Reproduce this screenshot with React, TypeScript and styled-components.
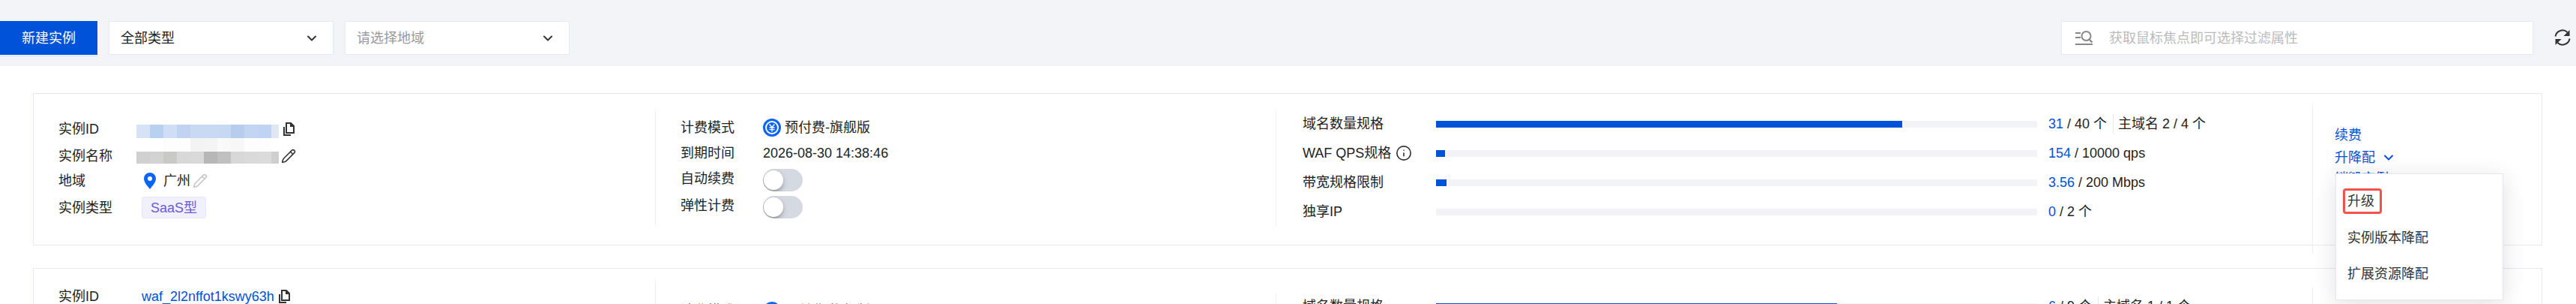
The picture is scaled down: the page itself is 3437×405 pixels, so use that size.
import React from "react";
import styled, { createGlobalStyle } from "styled-components";
import { ChevronDown, Info, Pencil } from "lucide-react";

const GlobalStyle = createGlobalStyle`
  html, body {
    margin: 0;
    padding: 0;
    background: #fff;
  }
  body {
    font-family: "Liberation Sans", "Noto Sans CJK SC", sans-serif;
    font-size: 18px;
    line-height: 20px;
    color: #222;
  }
`;

const Page = styled.div`
  width: 3437px;
  height: 405px;
  overflow: hidden;
  background: #fff;
`;

const Toolbar = styled.div`
  height: 88px;
  box-sizing: border-box;
  padding: 28px 6px 0 0;
  background: #f3f4f8;
  display: flex;
  justify-content: space-between;
  align-items: flex-start;
`;

const ToolGroup = styled.div`
  display: flex;
  align-items: flex-start;
  gap: 15px;
`;

const PrimaryButton = styled.button`
  width: 130px;
  height: 45px;
  border: none;
  padding: 0;
  background: #0052d9;
  color: #fff;
  font: inherit;
  box-shadow: 0 3px 0 #e6edf8;
`;

const Select = styled.div<{ $placeholder?: boolean }>`
  width: 300px;
  height: 45px;
  box-sizing: border-box;
  padding: 0 18px 0 15px;
  background: #fff;
  border: 1.5px solid #e6e9f1;
  display: flex;
  align-items: center;
  justify-content: space-between;
  color: ${(p) => (p.$placeholder ? "#999" : "#222")};
`;

const SearchBox = styled.div`
  width: 630px;
  height: 45px;
  box-sizing: border-box;
  padding: 0 0 0 18px;
  background: #fff;
  border: 1.5px solid #e6e9f1;
  display: flex;
  align-items: center;
  gap: 21px;
  color: #bbb;
`;

const RefreshButton = styled.div`
  width: 24px;
  height: 24px;
  margin: 10px 0 0 12px;
  color: #333;
`;

const CardList = styled.div`
  padding: 36px 45px 0 44px;
  display: flex;
  flex-direction: column;
  gap: 30px;
`;

const Card = styled.div`
  height: 203px;
  box-sizing: border-box;
  border: 1px solid #e8e9f0;
  display: grid;
  grid-template-columns: 829px 828px 1383px 1fr;
  align-items: start;
`;

const Column = styled.div<{ $top: number; $pad: number; $bottom?: number; $divider?: boolean; $left?: number }>`
  position: relative;
  margin-top: ${(p) => p.$top}px;
  padding: ${(p) => p.$pad}px 0 ${(p) => p.$bottom ?? 9}px ${(p) => p.$left ?? 33}px;
  border-left: ${(p) => (p.$divider ? "1px solid #eeeff4" : "none")};
`;

const InfoRow = styled.div<{ $h: number; $end?: boolean; $gap?: number }>`
  height: ${(p) => p.$h}px;
  margin-bottom: ${(p) => p.$gap ?? 0}px;
  display: flex;
  align-items: ${(p) => (p.$end ? "flex-end" : "center")};
`;

const Label = styled.div<{ $w: number }>`
  width: ${(p) => p.$w}px;
  flex: none;
  display: flex;
  align-items: center;
`;

const Mosaic = styled.div`
  display: flex;
  flex-direction: column;
  align-self: flex-end;
`;

const MosaicRow = styled.div<{ $h: number }>`
  height: ${(p) => p.$h}px;
  display: flex;
`;

const MosaicCell = styled.div<{ $c: string }>`
  width: 18px;
  background: ${(p) => p.$c};
  &:last-child {
    width: 10px;
  }
`;

const Value = styled.div<{ $indent?: number }>`
  margin-left: ${(p) => p.$indent ?? 0}px;
  display: flex;
  align-items: center;
`;

const LinkText = styled.span`
  color: #0052d9;
`;

const Tag = styled.div`
  box-sizing: border-box;
  height: 29px;
  margin-left: 7px;
  padding: 0 11px;
  display: flex;
  align-items: center;
  background: #f1f0fd;
  border: 1px solid #e9e9f6;
  border-radius: 3px;
  color: #6b5bd6;
`;

const Toggle = styled.div`
  width: 53px;
  height: 30px;
  align-self: flex-end;
  border-radius: 15px;
  background: #d5d9e2;
  overflow: hidden;
  position: relative;
  &::after {
    content: "";
    position: absolute;
    left: 1px;
    top: 2px;
    width: 26px;
    height: 26px;
    border-radius: 50%;
    background: #fff;
    box-shadow: -1px 3px 6px rgba(60, 60, 60, 0.5);
  }
`;

const QuotaGrid = styled.div`
  display: flex;
  flex-direction: column;
  gap: 3px;
`;

const QuotaRow = styled.div`
  height: 36px;
  display: flex;
  align-items: center;
`;

const Track = styled.div`
  width: 802px;
  height: 9px;
  flex: none;
  background: #f2f3f7;
  margin-right: 15px;
`;

const Fill = styled.div`
  height: 100%;
  background: #0052d9;
`;

const Sep = styled.span`
  width: 1px;
  height: 26px;
  background: #e7e8ee;
  margin: 0 6px 0 8px;
`;

const QuotaValue = styled.div`
  display: flex;
  align-items: center;
  white-space: pre;
`;

const ActionLink = styled.div<{ $lift?: number }>`
  height: 30px;
  margin-top: ${(p) => -(p.$lift ?? 0)}px;
  display: flex;
  align-items: center;
  gap: 8px;
  color: #0052d9;
`;

const Dropdown = styled.div`
  position: absolute;
  left: 30px;
  top: 92px;
  width: 224px;
  height: 169px;
  box-sizing: border-box;
  padding-top: 12px;
  background: #fff;
  border: 1px solid #e4e6f1;
  box-shadow: 0 6px 30px rgba(0, 0, 0, 0.12);
  z-index: 5;
`;

const DropdownItem = styled.div`
  height: 48.5px;
  padding-left: 15px;
  display: flex;
  align-items: center;
  color: #333;
`;

const Highlight = styled.span`
  height: 34px;
  box-sizing: border-box;
  margin-left: -6px;
  padding: 0 7px 0 3px;
  display: flex;
  align-items: center;
  border: 3px solid #f4524a;
  border-radius: 4px;
`;

const CopyIcon = () => (
  <svg width="15" height="18" viewBox="0 0 15 18" style={{ marginLeft: 6 }}>
    <path d="M1 6v11h9" fill="none" stroke="#333" strokeWidth="2" />
    <path d="M4 1h6l4 4v9H4z" fill="none" stroke="#333" strokeWidth="2" />
    <path d="M9 1h2l3 3v2H9z" fill="#333" />
  </svg>
);

const PinIcon = () => (
  <svg width="16" height="22" viewBox="0 0 16 22" style={{ marginRight: 10 }}>
    <path fillRule="evenodd" d="M8 0a8 8 0 0 1 8 8c0 5-5 10-8 14C5 18 0 13 0 8a8 8 0 0 1 8-8zm0 5a3 3 0 1 0 0 6 3 3 0 0 0 0-6z" fill="#0a64f5" />
  </svg>
);

const YuanIcon = () => (
  <svg width="24" height="24" viewBox="0 0 24 24" style={{ marginRight: 5 }}>
    <circle cx="12" cy="12" r="10.5" fill="#fff" stroke="#0a64f5" strokeWidth="3" />
    <circle cx="12" cy="12" r="7" fill="#0a64f5" />
    <path d="M8.6 7.5 12 11.5l3.4-4M8.5 12h7M8.5 14.6h7M12 11.5v6" fill="none" stroke="#fff" strokeWidth="1.3" />
  </svg>
);

const SearchFilterIcon = () => (
  <svg width="24" height="19" viewBox="0 0 24 19">
    <path d="M0 3h7M0 9h7M0 18h23" stroke="#888" strokeWidth="2" fill="none" />
    <circle cx="14.5" cy="7" r="6" stroke="#888" strokeWidth="2" fill="none" />
    <path d="M18.5 11.5l4 4" stroke="#888" strokeWidth="2.4" fill="none" />
  </svg>
);

const RefreshIcon = () => (
  <svg width="24" height="24" viewBox="0 0 24 24">
    <path d="M2.5 10.5A9.6 9.6 0 0 1 18.5 5" fill="none" stroke="currentColor" strokeWidth="2" />
    <path d="M21.5 13.5A9.6 9.6 0 0 1 5.5 19" fill="none" stroke="currentColor" strokeWidth="2" />
    <path d="M21.5 2v8h-8z" fill="currentColor" />
    <path d="M2.5 22v-8h8z" fill="currentColor" />
  </svg>
);

const blueCells = ["#d6e2f6", "#b9d0f0", "#d0def5", "#c0d3f1", "#c8d9f3", "#c8d9f3", "#c6d8f2", "#b8cdee", "#c3d5f2", "#bfd3f2", "#e0e6f2"];
const faintCells = ["#fff", "#fff", "#fdfdfd", "#fdfdfd", "#f3f3f3", "#f4f4f4", "#f8f9f8", "#f6f7f6", "#fdfdfd", "#fdfdfd", "#fefefe"];
const grayCells = ["#d0d0d0", "#d3d3d3", "#c9c9c8", "#d8d8d8", "#d9d9d9", "#b7b7b8", "#c0c0c0", "#d8d8d8", "#dadada", "#dbdbdb", "#cfcfcf"];

const MosaicLine = ({ cells, h }: { cells: string[]; h: number }) => (
  <MosaicRow $h={h}>
    {cells.map((c, i) => (
      <MosaicCell key={i} $c={c} />
    ))}
  </MosaicRow>
);

type Quota = { label: React.ReactNode; pct: number; used: string; rest: string; extra?: string };

const quotaA: Quota[] = [
  { label: "域名数量规格", pct: 77.5, used: "31", rest: " / 40 个", extra: "主域名 2 / 4 个" },
  {
    label: (
      <>
        WAF QPS规格
        <Info size={22} strokeWidth={1.8} color="#333" style={{ marginLeft: 6 }} />
      </>
    ),
    pct: 1.54,
    used: "154",
    rest: " / 10000 qps",
  },
  { label: "带宽规格限制", pct: 1.78, used: "3.56", rest: " / 200 Mbps" },
  { label: "独享IP", pct: 0, used: "0", rest: " / 2 个" },
];

const quotaB: Quota[] = [
  { label: "域名数量规格", pct: 66.7, used: "6", rest: " / 9 个", extra: "主域名 1 / 1 个" },
];

const QuotaList = ({ rows }: { rows: Quota[] }) => (
  <QuotaGrid>
    {rows.map((q, i) => (
      <QuotaRow key={i}>
        <Label $w={178}>{q.label}</Label>
        <Track>
          <Fill style={{ width: `${q.pct}%` }} />
        </Track>
        <QuotaValue>
          <LinkText>{q.used}</LinkText>
          {q.rest}
          {q.extra && <Sep />}
          {q.extra}
        </QuotaValue>
      </QuotaRow>
    ))}
  </QuotaGrid>
);

const App = () => {
  return (
    <Page>
      <GlobalStyle />
      <Toolbar>
        <ToolGroup>
          <PrimaryButton>新建实例</PrimaryButton>
          <Select>
            全部类型
            <ChevronDown size={20} strokeWidth={2.4} color="#333" />
          </Select>
          <Select $placeholder>
            请选择地域
            <ChevronDown size={20} strokeWidth={2.4} color="#333" />
          </Select>
        </ToolGroup>
        <ToolGroup>
          <SearchBox>
            <SearchFilterIcon />
            获取鼠标焦点即可选择过滤属性
          </SearchBox>
          <RefreshButton>
            <RefreshIcon />
          </RefreshButton>
        </ToolGroup>
      </Toolbar>

      <CardList>
        <Card>
          <Column $top={0} $pad={35} $left={33}>
            <InfoRow $h={24}>
              <Label $w={104}>实例ID</Label>
              <Mosaic>
                <MosaicLine cells={blueCells} h={18} />
              </Mosaic>
              <CopyIcon />
            </InfoRow>
            <InfoRow $h={34} $end>
              <Label $w={104}>实例名称</Label>
              <Mosaic>
                <MosaicLine cells={faintCells} h={18} />
                <MosaicLine cells={grayCells} h={16} />
              </Mosaic>
              <Pencil size={20} strokeWidth={2} color="#3c3c3c" style={{ marginLeft: 3 }} />
            </InfoRow>
            <InfoRow $h={46} $gap={-2}>
              <Label $w={104}>地域</Label>
              <Value $indent={10}>
                <PinIcon />
                广州
                <Pencil size={20} strokeWidth={2} color="#c8c8c8" style={{ marginLeft: 3 }} />
              </Value>
            </InfoRow>
            <InfoRow $h={29}>
              <Label $w={104}>实例类型</Label>
              <Tag>SaaS型</Tag>
            </InfoRow>
          </Column>
          <Column $top={22} $pad={6} $divider>
            <InfoRow $h={34}>
              <Label $w={110}>计费模式</Label>
              <YuanIcon />
              预付费-旗舰版
            </InfoRow>
            <InfoRow $h={34}>
              <Label $w={110}>到期时间</Label>
              2026-08-30 14:38:46
            </InfoRow>
            <InfoRow $h={34} $gap={2}>
              <Label $w={110}>自动续费</Label>
              <Toggle />
            </InfoRow>
            <InfoRow $h={34}>
              <Label $w={110}>弹性计费</Label>
              <Toggle />
            </InfoRow>
          </Column>
          <Column $top={22} $pad={0} $bottom={1} $divider $left={35}>
            <QuotaList rows={quotaA} />
          </Column>
          <Column $top={14} $pad={26} $bottom={85} $divider $left={29}>
            <ActionLink>续费</ActionLink>
            <ActionLink>
              升降配
              <ChevronDown size={20} strokeWidth={2.4} />
            </ActionLink>
            <ActionLink $lift={2}>销毁实例</ActionLink>
            <Dropdown>
              <DropdownItem>
                <Highlight>升级</Highlight>
              </DropdownItem>
              <DropdownItem>实例版本降配</DropdownItem>
              <DropdownItem>扩展资源降配</DropdownItem>
            </Dropdown>
          </Column>
        </Card>

        <Card>
          <Column $top={0} $pad={25} $left={33}>
            <InfoRow $h={24}>
              <Label $w={104}>实例ID</Label>
              <Value $indent={7}>
                <LinkText>waf_2l2nffot1kswy63h</LinkText>
                <CopyIcon />
              </Value>
            </InfoRow>
          </Column>
          <Column $top={15} $pad={24} $bottom={60} $divider>
            <InfoRow $h={34}>
              <Label $w={110}>计费模式</Label>
              <YuanIcon />
              预付费-旗舰版
            </InfoRow>
          </Column>
          <Column $top={32} $pad={0} $bottom={60} $divider $left={35}>
            <QuotaList rows={quotaB} />
          </Column>
          <Column $top={25} $pad={0} $bottom={60} $divider $left={30} />
        </Card>
      </CardList>
    </Page>
  );
};

export default App;
